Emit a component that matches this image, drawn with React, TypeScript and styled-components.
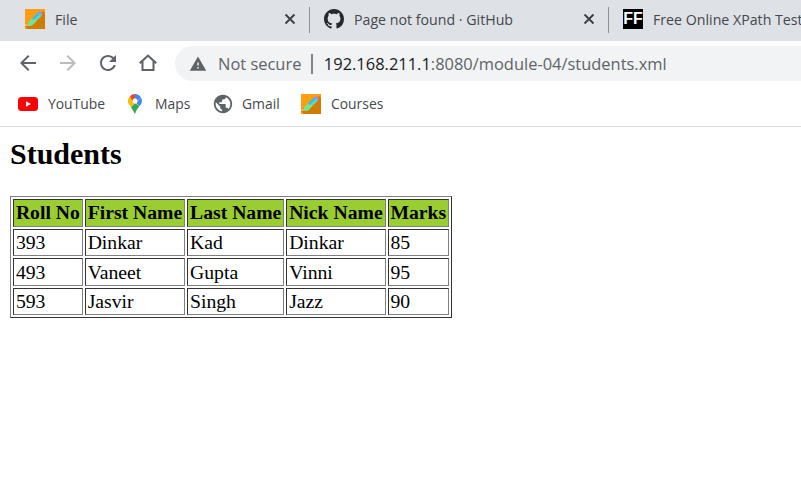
import React from "react";
import styled, { createGlobalStyle } from "styled-components";

const Global = createGlobalStyle`
  html, body { margin: 0; padding: 0; background: #fff; overflow: hidden; }
  #root { width: 801px; height: 477px; overflow: hidden; }
`;

const uiFont = `"Open Sans", "Noto Sans", "Liberation Sans", sans-serif`;

const Browser = styled.div`
  width: 801px;
  height: 477px;
  display: flex;
  flex-direction: column;
  overflow: hidden;
`;

const TabStrip = styled.div`
  height: 41px;
  flex: none;
  background: #dee1e6;
  display: flex;
  padding-left: 11px;
  overflow: hidden;
`;

const Tab = styled.div`
  flex: 0 0 299px;
  height: 41px;
  box-sizing: border-box;
  padding: 0 14px 3px 14px;
  display: flex;
  align-items: center;
  gap: 10px;
  position: relative;
  font: 14.2px ${uiFont};
  color: #45484c;
  white-space: nowrap;
  &:not(:last-child)::after {
    content: "";
    position: absolute;
    right: 0;
    top: 7px;
    height: 26px;
    width: 1px;
    background: #8e9196;
  }
`;

const TabTitle = styled.span`
  flex: 1;
  min-width: 0;
`;

const FontFavicon = styled.span`
  width: 20px;
  height: 20px;
  flex: none;
  background: #000;
  color: #fff;
  font: 700 16px/20px "Liberation Sans", sans-serif;
  text-align: center;
`;

const Toolbar = styled.div`
  height: 44px;
  flex: none;
  background: #fff;
  display: flex;
  align-items: center;
  padding-left: 16px;
`;

const NavButton = styled.span`
  width: 24px;
  height: 24px;
  flex: none;
  margin-right: 16px;
  color: ${(p: { $muted?: boolean }) => (p.$muted ? "#b9bbbe" : "#5f6368")};
  display: flex;
`;

const Omnibox = styled.div`
  flex: 1;
  height: 35px;
  margin: 1px 0 0 -1px;
  background: #f1f3f4;
  border-radius: 17.5px 0 0 17.5px;
  display: flex;
  align-items: center;
  padding-left: 14px;
  font: 16.45px ${uiFont};
  white-space: nowrap;
`;

const WarningIcon = styled.span`
  display: flex;
  color: #5f6368;
`;

const NotSecure = styled.span`
  color: #5f6368;
  margin-left: 11px;
`;

const Separator = styled.span`
  width: 1.5px;
  height: 20px;
  background: #80868b;
  margin: 0 11px 0 10px;
`;

const Host = styled.span`
  color: #202124;
`;

const UrlRest = styled.span`
  color: #5f6368;
`;

const Bookmarks = styled.div`
  height: 42px;
  flex: none;
  box-sizing: border-box;
  border-bottom: 1px solid #d9dadc;
  display: flex;
  align-items: center;
  padding: 0 0 3px 18px;
  font: 13.9px ${uiFont};
  color: #45484c;
`;

const Bookmark = styled.span`
  display: flex;
  align-items: center;
  gap: ${(p: { $gap: number; $width: number }) => p.$gap}px;
  width: ${(p: { $gap: number; $width: number }) => p.$width}px;
  flex: none;
`;

const BookmarkLabel = styled.span`
  margin-top: -2px;
`;

const Page = styled.main`
  flex: 1;
  padding: 9px 10px 10px;
  font-family: "Liberation Serif", "Times New Roman", serif;
  color: #000;
`;

const Heading = styled.h1`
  margin: 0 0 24px;
  font-size: 30px;
  line-height: 36px;
  font-weight: 700;
`;

const Table = styled.table`
  border-collapse: separate;
  border-spacing: 2px;
  border: 1px solid;
  border-color: #808080 #333 #333 #808080;
  font-size: 19.7px;
`;

const HeadCell = styled.th`
  background: #9acd32;
  border: 1px solid;
  border-color: #333 #808080 #808080 #333;
  padding: 0 1.9px 2px;
  height: 23.5px;
  line-height: 22px;
  font-weight: 700;
  text-align: left;
  white-space: nowrap;
`;

const Cell = styled.td`
  border: 1px solid;
  border-color: #333 #808080 #808080 #333;
  padding: 1px 1.9px;
  height: 23.5px;
  line-height: 22px;
  white-space: nowrap;
`;

const Pencil = () => (
  <svg width="20" height="20" viewBox="0 0 20 20" style={{ flex: "none" }}>
    <rect width="20" height="20" fill="#ff9d12" />
    <path d="M18 2 L20 4 L20 20 L3 20 L0 17 Z" fill="#cf7c00" />
    <path d="M0 15.6 H4 V16.6 H0Z" fill="#ffe0b0" />
    <path d="M3.5 13 L13.5 3 L17 6.5 L7 16.5 L3 17 Z" fill="#5fd6c0" />
    <path d="M3.5 13 L8 8.5 L11.5 12 L7 16.5 L3 17 Z" fill="#79e38a" />
    <path d="M7 9.5 L13.5 3 L15 4.5 L8.5 11 Z" fill="#3fb6ea" />
    <path d="M13.5 3 L15 1.8 L18.2 5 L17 6.5 Z" fill="#b884e8" />
  </svg>
);

const GitHubMark = () => (
  <svg width="20" height="20" viewBox="0 0 16 16" fill="#24292e" style={{ flex: "none" }}>
    <path d="M8 0C3.58 0 0 3.58 0 8c0 3.54 2.29 6.53 5.47 7.59.4.07.55-.17.55-.38 0-.19-.01-.82-.01-1.49-2.01.37-2.53-.49-2.69-.94-.09-.23-.48-.94-.82-1.13-.28-.15-.68-.52-.01-.53.63-.01 1.08.58 1.23.82.72 1.21 1.87.87 2.33.66.07-.52.28-.87.51-1.07-1.78-.2-3.64-.89-3.64-3.95 0-.87.31-1.59.82-2.15-.08-.2-.36-1.02.08-2.12 0 0 .67-.21 2.2.82.64-.18 1.32-.27 2-.27s1.36.09 2 .27c1.53-1.04 2.2-.82 2.2-.82.44 1.1.16 1.92.08 2.12.51.56.82 1.27.82 2.15 0 3.07-1.87 3.75-3.65 3.95.29.25.54.73.54 1.48 0 1.07-.01 1.93-.01 2.2 0 .21.15.46.55.38A8.01 8.01 0 0016 8c0-4.42-3.58-8-8-8z" />
  </svg>
);

const CloseIcon = () => (
  <svg width="12" height="12" viewBox="0 0 12 12" style={{ flex: "none" }}>
    <path d="M1.5 1.5 L10.5 10.5 M10.5 1.5 L1.5 10.5" stroke="#3c4043" strokeWidth="1.9" fill="none" />
  </svg>
);

const MatIcon = ({ d, size = 24 }: { d: string; size?: number }) => (
  <svg width={size} height={size} viewBox="0 0 24 24" fill="currentColor" style={{ flex: "none" }}>
    <path d={d} />
  </svg>
);

const YouTube = () => (
  <svg width="20" height="14" viewBox="0 0 20 14" style={{ flex: "none" }}>
    <rect width="20" height="14" rx="3.5" fill="#f00" />
    <path d="M8 4.2 L13 7 L8 9.8Z" fill="#fff" />
  </svg>
);

const MapsPin = () => (
  <svg width="14" height="20" viewBox="0 0 14 20" style={{ flex: "none" }}>
    <path d="M3 13 L7 20 C8 16 10 14.5 11.5 12 L7 9Z" fill="#34a853" />
    <path d="M2 2.2 A7 7 0 0 0 1.2 10.8 L7 7Z" fill="#fbbc04" />
    <path d="M1.2 10.2 L3 13 L11 5 L7 4 Z" fill="#fbbc04" />
    <path d="M2 2.2 A7 7 0 0 1 7 0 L7 4 L4.5 7 Z" fill="#ea4335" />
    <path d="M7 0 A7 7 0 0 1 13 3.5 L9.5 7 L7 4 Z" fill="#4285f4" />
    <path d="M13 3.5 A7 7 0 0 1 11.5 12 L8 9 Z" fill="#4285f4" />
    <circle cx="7" cy="7" r="2.5" fill="#fff" />
  </svg>
);

const back = "M20 11H7.83l5.59-5.59L12 4l-8 8 8 8 1.41-1.41L7.83 13H20v-2z";
const forward = "M4 11h12.17l-5.59-5.59L12 4l8 8-8 8-1.41-1.41L16.17 13H4v-2z";
const reload = "M17.65 6.35C16.2 4.9 14.21 4 12 4c-4.42 0-7.99 3.58-7.99 8s3.57 8 7.99 8c3.73 0 6.84-2.55 7.73-6h-2.08c-.82 2.33-3.04 4-5.65 4-3.31 0-6-2.69-6-6s2.69-6 6-6c1.66 0 3.14.69 4.22 1.78L13 11h7V4l-2.35 2.35z";
const home = "M12 3.2 3 11.6l1.3 1.4L5.5 12v8h13v-8l1.2 1 1.3-1.4L12 3.2zM16.5 18h-9v-7.8L12 6l4.5 4.2V18z";
const warning = "M1 21h22L12 2 1 21zm12-3h-2v-2h2v2zm0-4h-2v-4h2v4z";
const globe = "M12 2C6.48 2 2 6.48 2 12s4.48 10 10 10 10-4.48 10-10S17.52 2 12 2zm-1 17.93c-3.95-.49-7-3.85-7-7.93 0-.62.08-1.21.21-1.79L9 15v1c0 1.1.9 2 2 2v1.93zm6.9-2.54c-.26-.81-1-1.39-1.9-1.39h-1v-3c0-.55-.45-1-1-1H8v-2h2c.55 0 1-.45 1-1V7h2c1.1 0 2-.9 2-2v-.41c2.93 1.19 5 4.06 5 7.41 0 2.08-.8 3.97-2.1 5.39z";

const GlobeIcon = styled.span`
  display: flex;
  margin-left: -2px;
  color: #5f6368;
`;

const rows = [
  ["393", "Dinkar", "Kad", "Dinkar", "85"],
  ["493", "Vaneet", "Gupta", "Vinni", "95"],
  ["593", "Jasvir", "Singh", "Jazz", "90"],
];

export default function App() {
  return (
    <>
      <Global />
      <Browser>
        <TabStrip>
          <Tab>
            <Pencil />
            <TabTitle>File</TabTitle>
            <CloseIcon />
          </Tab>
          <Tab>
            <GitHubMark />
            <TabTitle>Page not found · GitHub</TabTitle>
            <CloseIcon />
          </Tab>
          <Tab>
            <FontFavicon>FF</FontFavicon>
            <TabTitle>Free Online XPath Test</TabTitle>
          </Tab>
        </TabStrip>
        <Toolbar>
          <NavButton><MatIcon d={back} /></NavButton>
          <NavButton $muted><MatIcon d={forward} /></NavButton>
          <NavButton><MatIcon d={reload} /></NavButton>
          <NavButton><MatIcon d={home} /></NavButton>
          <Omnibox>
            <WarningIcon><MatIcon d={warning} size={18} /></WarningIcon>
            <NotSecure>Not secure</NotSecure>
            <Separator />
            <Host>192.168.211.1</Host>
            <UrlRest>:8080/module-04/students.xml</UrlRest>
          </Omnibox>
        </Toolbar>
        <Bookmarks>
          <Bookmark $gap={10} $width={110}><YouTube /><BookmarkLabel>YouTube</BookmarkLabel></Bookmark>
          <Bookmark $gap={13} $width={86}><MapsPin /><BookmarkLabel>Maps</BookmarkLabel></Bookmark>
          <Bookmark $gap={8} $width={87}>
            <GlobeIcon><MatIcon d={globe} size={22} /></GlobeIcon>
            <BookmarkLabel>Gmail</BookmarkLabel>
          </Bookmark>
          <Bookmark $gap={10} $width={100}><Pencil /><BookmarkLabel>Courses</BookmarkLabel></Bookmark>
        </Bookmarks>
        <Page>
          <Heading>Students</Heading>
          <Table>
            <thead>
              <tr>
                {["Roll No", "First Name", "Last Name", "Nick Name", "Marks"].map((h) => (
                  <HeadCell key={h}>{h}</HeadCell>
                ))}
              </tr>
            </thead>
            <tbody>
              {rows.map((r) => (
                <tr key={r[0]}>
                  {r.map((c, i) => (
                    <Cell key={i}>{c}</Cell>
                  ))}
                </tr>
              ))}
            </tbody>
          </Table>
        </Page>
      </Browser>
    </>
  );
}
